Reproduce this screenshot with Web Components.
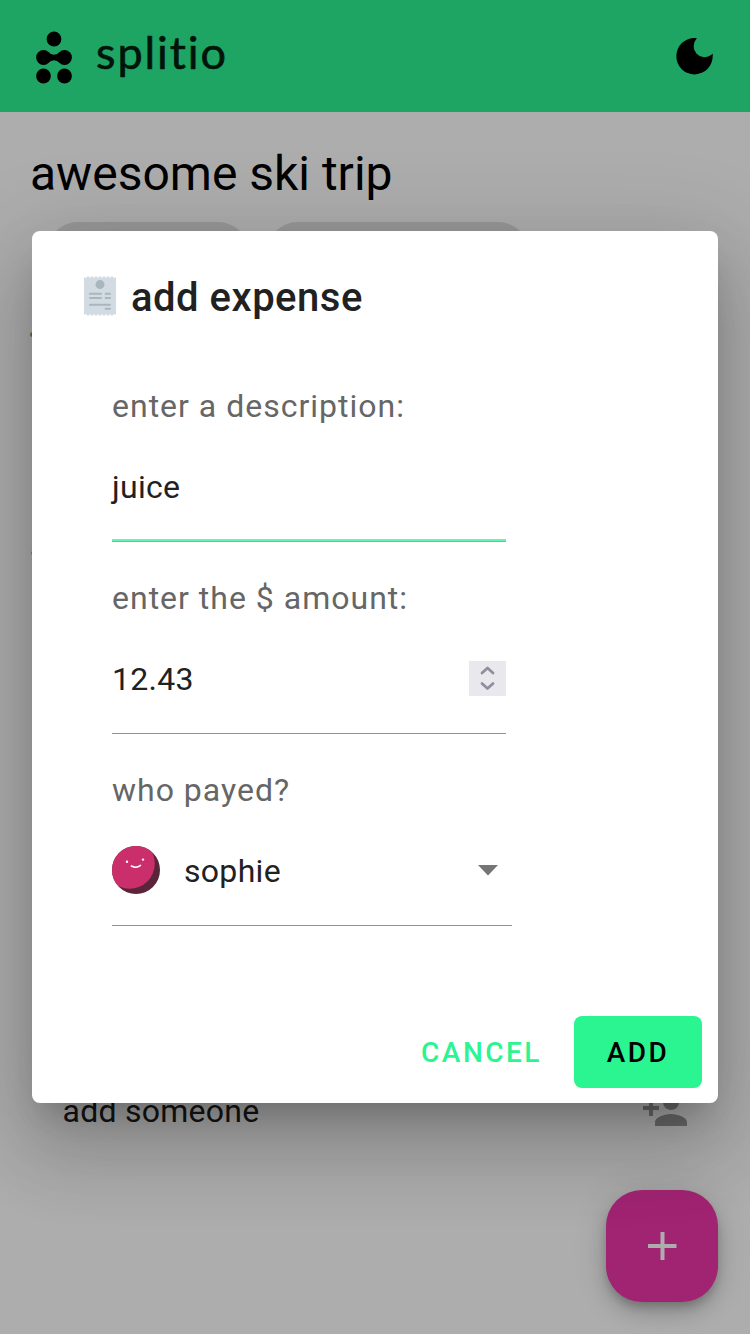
<!DOCTYPE html>
<html lang="en">
<head>
<meta charset="utf-8">
<title>splitio</title>
<style>
html, body { margin: 0; background: #fff; }
body { font-family: Roboto, "Liberation Sans", sans-serif; overflow: hidden; }
</style>
</head>
<body>
<splitio-app></splitio-app>
<script>
function define(name, html) {
  const t = document.createElement('template');
  t.innerHTML = html;
  customElements.define(name, class extends HTMLElement {
    constructor() {
      super();
      this.attachShadow({ mode: 'open' }).appendChild(t.content.cloneNode(true));
    }
  });
}

define('app-bar', `
<style>
:host { display: flex; align-items: center; height: 112px; box-sizing: border-box; padding: 0 36px; background: #2ef492; color: #00200f; }
.brand { font: 400 45px/56px Lato, sans-serif; letter-spacing: 1.900px; margin-left: 24px; padding-bottom: 8px; flex: 1; -webkit-text-stroke: .6px #00200f; }
svg { display: block; }
.logo { margin-top: 3px; }
</style>
<svg class="logo" width="36" height="54" viewBox="0 0 36 54"><circle cx="18" cy="8" r="7.400"/><circle cx="7.500" cy="26.500" r="7.400"/><circle cx="28.500" cy="26.500" r="7.400"/><path d="M12 21q6 5.500 12 0v11q-6-5.500-12 0z"/><circle cx="7.500" cy="45" r="7.400"/><circle cx="28.500" cy="45" r="7.400"/></svg>
<span class="brand">splitio</span>
<svg width="40" height="40" viewBox="674 36 40 40"><path d="M695 38Q698 38 696.500 38.800A11 11 0 0 0 711.500 54.800Q713.300 52.600 712.700 55.500A18.200 18.200 0 1 1 695 38Z"/></svg>
`);

define('trip-chip', `
<style>:host { display: block; width: var(--w); height: 64px; border-radius: 32px; background: #e0e0e0; }</style>
`);

define('trip-page', `
<style>
:host { display: block; position: relative; height: 1222px; background: #fff; color: #000; }
h1 { margin: 0; padding: 34px 30px 0; font-weight: 400; font-size: 48px; line-height: 56px; }
.chips { display: flex; gap: 16px; padding: 20px 46px 0; }
.list { height: 800px; }
.row { display: flex; align-items: center; justify-content: space-between; padding: 0 61px 0 62.500px; height: 48px; }
.row span { font-size: 32px; line-height: 40px; letter-spacing: .25px; padding-top: 2px; color: #202020; }
.row svg { fill: rgba(0,0,0,.38); }
.dot { position: absolute; border-radius: 50%; }
</style>
<h1>awesome ski trip</h1>
<div class="chips"><trip-chip style="--w:204px"></trip-chip><trip-chip style="--w:264px"></trip-chip></div>
<div class="list"></div>
<div class="row"><span>add someone</span><svg width="48" height="48" viewBox="0 0 24 24"><path d="M15 12c2.210 0 4-1.790 4-4s-1.790-4-4-4-4 1.790-4 4 1.790 4 4 4zm-9-2V7H4v3H1v2h3v3h2v-3h3v-2H6zm9 4c-2.670 0-8 1.340-8 4v2h16v-2c0-2.660-5.330-4-8-4z"/></svg></div>
<i class="dot" style="left:30px;top:220px;width:6px;height:5px;background:#74b85a"></i>
<i class="dot" style="left:31px;top:439px;width:6px;height:4px;background:#d9b070"></i>
`);

define('add-fab', `
<style>
:host { position: absolute; left: 606px; top: 1190px; width: 112px; height: 112px; border-radius: 36px; background: #ee35a8; display: flex; align-items: center; justify-content: center;
 box-shadow: 0 6px 10px -2px rgba(0,0,0,.2), 0 12px 20px 0 rgba(0,0,0,.14), 0 2px 36px 0 rgba(0,0,0,.12); }
</style>
<svg width="48" height="48" viewBox="0 0 48 48"><path d="M38.500 26H26.500V38H22.500V26H10V22H22.500V10H26.500V22H38.500z" fill="#fff"/></svg>
`);

define('form-field', `
<style>
:host { display: flex; flex-direction: column; height: 192px; box-sizing: border-box; padding-top: 36px; width: var(--w, 394px); border-bottom: 1px solid #919191; }
label { font-size: 32px; line-height: 40px; letter-spacing: 1px; color: #666; white-space: nowrap; }
.value { display: flex; align-items: center; height: 40px; margin-top: 41px; font-size: 32px; line-height: 40px; letter-spacing: .3px; color: #212121; }
:host([focused]) { border: 0; background: linear-gradient(#7debb2 0 1px, #62f4ac 1px 2px, #50cf90 2px 3px) 0 100% / 100% 3px no-repeat; }
</style>
<label><slot name="label"></slot></label>
<div class="value"><slot></slot></div>
`);

define('number-stepper', `
<style>:host { display: block; margin: 0 0 2px auto; width: 37px; height: 35px; background: #e9e9ed; } svg { display: block; }</style>
<svg width="37" height="35" fill="none" stroke="#8f8f9d" stroke-width="2.800" stroke-linecap="round" stroke-linejoin="round"><path d="M13 12l5.500-5 5.500 5M13 22.500l5.500 5 5.500-5"/></svg>
`);

define('user-avatar', `
<style>:host { display: block; width: 48px; height: 48px; margin: -2px 24px 0 0; } svg { display: block; }</style>
<svg width="48" height="48" viewBox="0 0 48 48"><clipPath id="c"><circle cx="24" cy="24" r="24"/></clipPath><g clip-path="url(#c)"><rect width="48" height="48" fill="#592639"/><circle cx="17.500" cy="17.500" r="25.300" fill="#cb2f6b"/><g fill="#fff"><circle cx="15" cy="15.800" r="1.200"/><circle cx="31" cy="13.600" r="1.200"/></g><path d="M19.300 20q5.200 2.600 9.200-.6" fill="none" stroke="#fff" stroke-width="1.500" stroke-linecap="round"/></g></svg>
`);

define('drop-arrow', `
<style>:host { display: block; margin: 0 14px 0 auto; } svg { display: block; }</style>
<svg width="20" height="12"><path d="M0 0h20L10 10.500z" fill="#757575"/></svg>
`);

define('receipt-icon', `
<style>:host { display: block; width: 32px; height: 40px; } svg { display: block; }</style>
<svg width="32" height="40" viewBox="0 0 32 40"><path fill="#d2dbe2" d="M0 1l2 1 2-2 2 2 2-2 2 2 2-2 2 2 2-2 2 2 2-2 2 2 2-2 2 2 2-2 2 2 2-1v38l-2-1-2 2-2-2-2 2-2-2-2 2-2-2-2 2-2-2-2 2-2-2-2 2-2-2-2 2-2-2-2 1z"/><g fill="#a8b6bf"><circle cx="16" cy="8.600" r="4.500"/><rect x="5" y="16.700" width="13" height="2" rx="1"/><rect x="20.600" y="16.700" width="6.400" height="2" rx="1"/><rect x="5" y="20.900" width="13" height="2" rx="1"/><rect x="20.600" y="20.900" width="6.400" height="2" rx="1"/><rect x="5" y="27.700" width="22" height="2" rx="1"/><rect x="20.600" y="31.800" width="6.400" height="2" rx="1"/></g></svg>
`);

define('flat-button', `
<style>
:host { display: flex; align-items: center; justify-content: center; height: 72px; box-sizing: border-box; border-radius: 8px; color: #2bf591; font-weight: 500; font-size: 28px; line-height: 36px; letter-spacing: 2.500px; padding: 2px 32px 0 16px; }
:host([raised]) { background: #2bf591; color: #000; width: 128px; padding: 2px 0 0; }
</style>
<slot></slot>
`);

define('expense-dialog', `
<style>
:host { position: absolute; left: 32px; top: 231px; width: 686px; height: 872px; box-sizing: border-box; background: #fff; border-radius: 8px; display: flex; flex-direction: column;
 box-shadow: 0 22px 30px -14px rgba(0,0,0,.2), 0 48px 76px 6px rgba(0,0,0,.14), 0 18px 92px 16px rgba(0,0,0,.12); }
h2 { display: flex; align-items: center; margin: 0; padding: 41px 52px 0; height: 48px; gap: 15px; font-weight: 500; font-size: 40px; line-height: 48px; letter-spacing: .5px; color: #212121; }
h2 span { padding-top: 4px; }
.form { padding: 30px 80px 0; }
.actions { display: flex; justify-content: flex-end; margin-top: auto; padding: 0 16px 15px; }
</style>
<h2><receipt-icon></receipt-icon><span>add expense</span></h2>
<div class="form">
<form-field focused><span slot="label">enter a description:</span><span>juice</span></form-field>
<form-field><span slot="label">enter the $ amount:</span><span>12.43</span><number-stepper></number-stepper></form-field>
<form-field style="--w:400px"><span slot="label">who payed?</span><user-avatar></user-avatar><span>sophie</span><drop-arrow></drop-arrow></form-field>
</div>
<div class="actions"><flat-button>CANCEL</flat-button><flat-button raised>ADD</flat-button></div>
`);

define('splitio-app', `
<style>
:host { display: block; position: relative; width: 750px; height: 1334px; overflow: hidden; }
.scrim { position: absolute; inset: 0; background: rgba(0,0,0,.32); }
</style>
<app-bar></app-bar>
<trip-page></trip-page>
<add-fab></add-fab>
<div class="scrim"></div>
<expense-dialog></expense-dialog>
`);
</script>
</body>
</html>
